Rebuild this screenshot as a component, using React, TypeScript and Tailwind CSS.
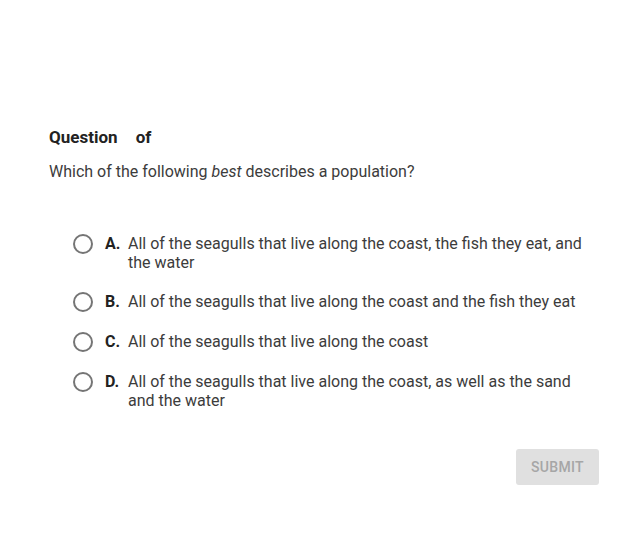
import { useState } from "react";

interface Choice {
  key: string;
  text: string;
}

const CHOICES: Choice[] = [
  { key: "A", text: "All of the seagulls that live along the coast, the fish they eat, and the water" },
  { key: "B", text: "All of the seagulls that live along the coast and the fish they eat" },
  { key: "C", text: "All of the seagulls that live along the coast" },
  { key: "D", text: "All of the seagulls that live along the coast, as well as the sand and the water" },
];

export default function App() {
  const [selected, setSelected] = useState<string | null>(null);

  return (
    <div
      className="w-[641px] h-[543px] bg-white text-[#3c3c3c] pt-[127px] pl-[49px] pr-[42px]"
      style={{ fontFamily: "Roboto, 'Liberation Sans', sans-serif" }}
    >
      <h2 className="text-[17px] leading-[20px] font-bold text-[#222222]">
        Question <span className="ml-[14px]">of</span>
      </h2>

      <p className="mt-[15px] text-[16px] leading-[20px]">
        Which of the following <em>best</em> describes a population?
      </p>

      <div className="mt-[52px] pl-[24px] flex flex-col gap-[20px]">
        {CHOICES.map((c) => (
          <label
            key={c.key}
            className="flex items-start cursor-pointer"
            onClick={() => setSelected(c.key)}
          >
            <span className="w-[20px] h-[20px] rounded-full border-2 border-[#757575] shrink-0 flex items-center justify-center">
              {selected === c.key && <span className="w-[10px] h-[10px] rounded-full bg-[#757575]" />}
            </span>
            <span className="ml-[12px] w-[23px] shrink-0 text-[16px] leading-[19px] font-bold text-[#222222]">
              {c.key}.
            </span>
            <span className="w-[464px] text-[16px] leading-[19px]">{c.text}</span>
          </label>
        ))}
      </div>

      <div className="mt-[39px] flex justify-end">
        <button className="w-[83px] h-[36px] rounded-[3px] bg-[#e0e0e0] text-[#a6a6a6] text-[14px] font-medium tracking-[0.3px]">
          SUBMIT
        </button>
      </div>
    </div>
  );
}
